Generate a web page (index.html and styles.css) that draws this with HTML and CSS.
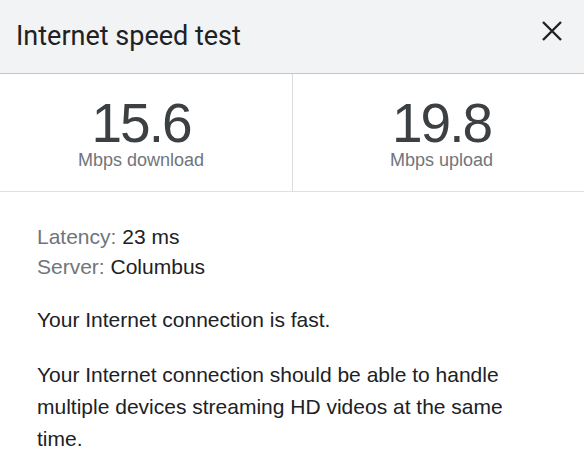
FILE: index.html
```html
<!DOCTYPE html>
<html>
<head>
<meta charset="utf-8">
<link rel="stylesheet" href="styles.css">
</head>
<body>
<div class="dialog">
  <header class="header">
    <h1 class="title">Internet speed test</h1>
    <button class="close" aria-label="Close">
      <svg width="20" height="20" viewBox="0 0 20 20"><path d="M1 1L19 19M19 1L1 19" stroke="#202124" stroke-width="2.4" fill="none"/></svg>
    </button>
  </header>
  <section class="stats">
    <div class="stat stat-left">
      <div class="value">15.6</div>
      <div class="unit">Mbps download</div>
    </div>
    <div class="stat stat-right">
      <div class="value">19.8</div>
      <div class="unit">Mbps upload</div>
    </div>
  </section>
  <section class="details">
    <div class="meta">
      <div><span class="label">Latency:</span> 23 ms</div>
      <div><span class="label">Server:</span> Columbus</div>
    </div>
    <p class="text first">Your Internet connection is fast.</p>
    <p class="text">Your Internet connection should be able to handle multiple devices streaming HD videos at the same time.</p>
  </section>
</div>
</body>
</html>
```
FILE: styles.css
```css
* { box-sizing: border-box; }
html, body { margin: 0; padding: 0; background: #fff; }
body { font-family: "Liberation Sans", Arial, sans-serif; color: #202124; }
.dialog { width: 584px; }
.header {
  height: 74px;
  background: #f1f3f4;
  border-bottom: 1px solid #c4c6c8;
  display: flex;
  align-items: center;
  justify-content: space-between;
  padding: 0 22px 0 16px;
}
.title {
  margin: 0;
  font-family: Roboto, "Liberation Sans", sans-serif;
  font-weight: 400;
  font-size: 27px;
  color: #202124;
  padding-bottom: 2px;
}
.close {
  background: none; border: 0; padding: 0; margin: 0;
  width: 20px; height: 20px; display: flex; margin-top: -12px;
}
.stats {
  display: grid;
  grid-template-columns: 1fr 1fr;
  height: 118px;
  border-bottom: 1px solid #e0e0e0;
}
.stat {
  display: flex;
  flex-direction: column;
  align-items: center;
  padding-top: 22px;
}
.stat-left { padding-right: 10px; }
.stat-right { border-left: 1px solid #dcdcdc; padding-left: 6px; }
.value {
  font-size: 55px;
  line-height: 54px;
  color: #3c4043;
  letter-spacing: -2px;
}
.unit {
  font-size: 18px;
  line-height: 20px;
  color: #70757a;
}
.details {
  padding: 30px 37px 0 37px;
  font-size: 21px;
}
.meta { line-height: 30px; }
.label { color: #70757a; }
.text {
  margin: 23px 0 0 0;
  line-height: 32px;
}
.text.first { margin-top: 22px; }
```
